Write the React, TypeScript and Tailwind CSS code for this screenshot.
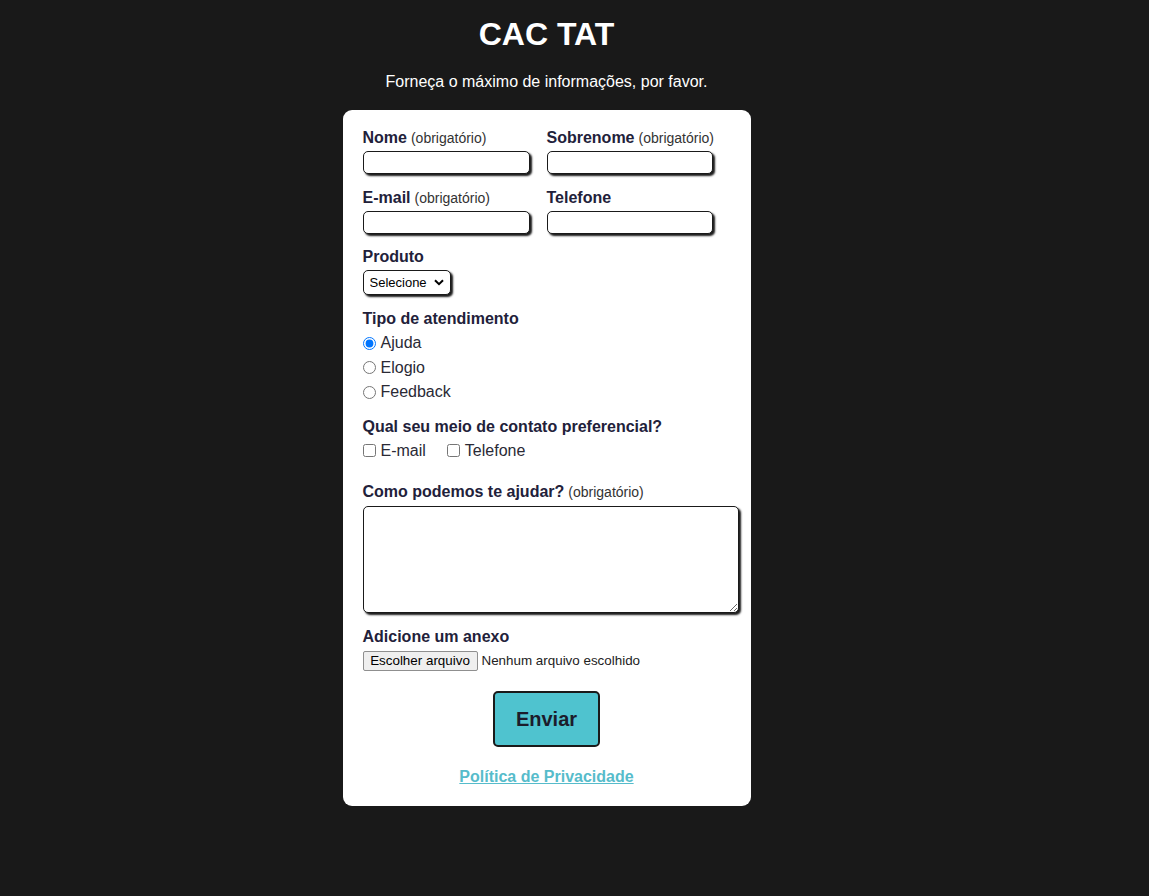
import React from "react";

const inputCls =
  "block h-[23px] rounded-[5px] border border-[#1a1a1a] bg-white shadow-[2px_2px_2px_#1a1a1a] outline-none";

function Label({ text, req }: { text: string; req?: boolean }) {
  return (
    <div className="h-[18px] leading-[18px] text-[16px] font-bold text-[#22213a]">
      {text}
      {req && <span className="ml-[4px] text-[14px] font-normal text-[#333]">(obrigatório)</span>}
    </div>
  );
}

export default function App() {
  return (
    <div
      className="min-h-[896px] w-full bg-[#191919] flex flex-col items-center pr-[56px]"
      style={{ fontFamily: '"Liberation Sans", Arial, sans-serif' }}
    >
      <h1 className="mt-[16px] text-[32px] leading-[37px] font-bold text-white">CAC TAT</h1>
      <p className="mt-[20px] text-[16px] leading-[18px] text-white">Forneça o máximo de informações, por favor.</p>
      <div className="mt-[19px] w-[408px] rounded-[9px] bg-white pt-[19px] pb-[20px] pl-[20px] pr-[12px]">
        <div className="flex gap-[17px]">
          <div className="w-[167px]">
            <Label text="Nome" req />
            <input className={inputCls + " mt-[4px] w-[167px]"} />
          </div>
          <div className="w-[167px]">
            <Label text="Sobrenome" req />
            <input className={inputCls + " mt-[4px] w-[166px]"} />
          </div>
        </div>
        <div className="mt-[15px] flex gap-[17px]">
          <div className="w-[167px]">
            <Label text="E-mail" req />
            <input className={inputCls + " mt-[4px] w-[167px]"} />
          </div>
          <div className="w-[167px]">
            <Label text="Telefone" />
            <input className={inputCls + " mt-[4px] w-[166px]"} />
          </div>
        </div>
        <div className="mt-[14px]">
          <Label text="Produto" />
          <div className="relative mt-[4px] w-[88px] h-[25px]">
            <select className="block h-[25px] w-[88px] appearance-none rounded-[5px] border border-[#1a1a1a] bg-white pl-[6px] text-[13px] text-black shadow-[2px_2px_2px_#1a1a1a] outline-none">
              <option>Selecione</option>
            </select>
            <svg
              className="pointer-events-none absolute right-[7px] top-[9px]"
              width="10"
              height="7"
              viewBox="0 0 10 7"
            >
              <path d="M1 1.2 L5 5.2 L9 1.2" fill="none" stroke="#000" strokeWidth="2" />
            </svg>
          </div>
        </div>
        <div className="mt-[15px]">
          <Label text="Tipo de atendimento" />
          <div className="mt-[3px] flex flex-col">
            {["Ajuda", "Elogio", "Feedback"].map((t, i) => (
              <label key={t} className="flex h-[24.5px] items-center text-[16px] text-[#2a2a35]">
                <input type="radio" name="tipo" defaultChecked={i === 0} className="m-0 h-[13px] w-[13px]" />
                <span className="ml-[5px]">{t}</span>
              </label>
            ))}
          </div>
        </div>
        <div className="mt-[13px]">
          <Label text="Qual seu meio de contato preferencial?" />
          <div className="mt-[3px] flex h-[24px] items-center text-[16px] text-[#2a2a35]">
            <label className="flex items-center">
              <input type="checkbox" className="m-0 h-[13px] w-[13px]" />
              <span className="ml-[5px]">E-mail</span>
            </label>
            <label className="ml-[21px] flex items-center">
              <input type="checkbox" className="m-0 h-[13px] w-[13px]" />
              <span className="ml-[5px]">Telefone</span>
            </label>
          </div>
        </div>
        <div className="mt-[20px]">
          <Label text="Como podemos te ajudar?" req />
          <textarea className="mt-[5px] block h-[107px] w-[376px] rounded-[5px] border border-[#1a1a1a] bg-white shadow-[2px_2px_2px_#1a1a1a] outline-none" />
        </div>
        <div className="mt-[15px]">
          <Label text="Adicione um anexo" />
          <div className="mt-[5px] flex items-center text-[13.4px] text-[#222]">
            <button className="h-[20px] w-[115px] rounded-[2px] border border-[#8f8f8f] bg-[#efefef] text-[13.4px] leading-[18px] text-black">
              Escolher arquivo
            </button>
            <span className="ml-[4px]">Nenhum arquivo escolhido</span>
          </div>
        </div>
        <div className="mt-[20px] flex justify-center pr-[8px]">
          <button className="h-[56px] w-[107px] rounded-[5px] border-2 border-[#1a1a1a] bg-[#4fc3cf] text-[20px] font-bold text-[#1c1c2b]">
            Enviar
          </button>
        </div>
        <div className="mt-[21px] flex justify-center pr-[8px]">
          <a href="#" className="text-[16px] leading-[18px] font-bold text-[#56bccb] underline">
            Política de Privacidade
          </a>
        </div>
      </div>
    </div>
  );
}
